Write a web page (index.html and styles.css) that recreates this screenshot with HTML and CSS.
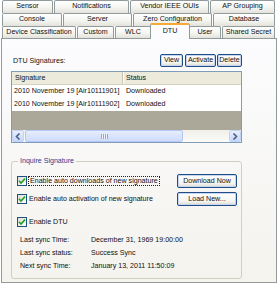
FILE: index.html
```html
<!DOCTYPE html>
<html>
<head>
<meta charset="utf-8">
<link rel="stylesheet" href="styles.css">
</head>
<body>
<div class="dialog">
  <div class="tabrow r1">
    <div class="tab">Sensor</div>
    <div class="tab">Notifications</div>
    <div class="tab">Vendor IEEE OUIs</div>
    <div class="tab">AP Grouping</div>
  </div>
  <div class="tabrow r2">
    <div class="tab">Console</div>
    <div class="tab">Server</div>
    <div class="tab">Zero Configuration</div>
    <div class="tab">Database</div>
  </div>
  <div class="tabrow r3">
    <div class="tab">Device Classification</div>
    <div class="tab">Custom</div>
    <div class="tab">WLC</div>
    <div class="tab selected">DTU</div>
    <div class="tab">User</div>
    <div class="tab">Shared Secret</div>
  </div>
  <div class="panel">
    <div class="sig-head">
      <span class="sig-label">DTU Signatures:</span>
      <div class="btns">
        <button class="btn b-view">View</button>
        <button class="btn b-activate">Activate</button>
        <button class="btn b-delete">Delete</button>
      </div>
    </div>
    <div class="list">
      <div class="lhead">
        <div class="c1">Signature</div>
        <div class="c2">Status</div>
      </div>
      <div class="lrow"><div class="c1">2010 November 19 [Air10111901]</div><div class="c2">Downloaded</div></div>
      <div class="lrow"><div class="c1">2010 November 19 [Air10111902]</div><div class="c2">Downloaded</div></div>
      <div class="lempty"></div>
      <div class="hscroll">
        <div class="sbtn"><svg width="6" height="7" viewBox="0 0 6 7"><path d="M4.5 0.5 L1.5 3.5 L4.5 6.5" fill="none" stroke="#4d6185" stroke-width="1.6"/></svg></div>
        <div class="track">
          <div class="thumb"><span class="grip"></span></div>
        </div>
        <div class="sbtn"><svg width="6" height="7" viewBox="0 0 6 7"><path d="M1.5 0.5 L4.5 3.5 L1.5 6.5" fill="none" stroke="#4d6185" stroke-width="1.6"/></svg></div>
      </div>
    </div>
    <fieldset class="group">
      <legend>Inquire Signature</legend>
      <div class="opt-row">
        <label class="chk"><span class="box"><svg width="8" height="8" viewBox="0 0 8 8"><path d="M1 3.8 L3 6 L7 1.6" fill="none" stroke="#21a121" stroke-width="1.6"/></svg></span><span class="focus">Enable auto downloads of new signature</span></label>
        <button class="btn wide">Download Now</button>
      </div>
      <div class="opt-row r-two">
        <label class="chk"><span class="box"><svg width="8" height="8" viewBox="0 0 8 8"><path d="M1 3.8 L3 6 L7 1.6" fill="none" stroke="#21a121" stroke-width="1.6"/></svg></span><span>Enable auto activation of new signature</span></label>
        <button class="btn wide">Load New...</button>
      </div>
      <div class="opt-row r-three">
        <label class="chk"><span class="box"><svg width="8" height="8" viewBox="0 0 8 8"><path d="M1 3.8 L3 6 L7 1.6" fill="none" stroke="#21a121" stroke-width="1.6"/></svg></span><span>Enable DTU</span></label>
      </div>
      <div class="sync">
        <div class="srow"><span class="sl">Last sync Time:</span><span>December 31, 1969 19:00:00</span></div>
        <div class="srow"><span class="sl">Last sync status:</span><span>Success Sync</span></div>
        <div class="srow"><span class="sl">Next sync Time:</span><span>January 13, 2011 11:50:09</span></div>
      </div>
    </fieldset>
  </div>
</div>
</body>
</html>
```
FILE: styles.css
```css
* { box-sizing: border-box; }
html, body { margin: 0; padding: 0; }
body {
  background: #ffffff;
  font-family: "Liberation Sans", Arial, sans-serif;
  font-size: 7.1px;
  color: #111;
  width: 280px;
  height: 284px;
  overflow: hidden;
}
.dialog {
  width: 277px;
  padding-left: 1px;
}
.tabrow {
  display: grid;
  column-gap: 1px;
  height: 13px;
  margin: 0 2px 0 1px;
}
.r1 { grid-template-columns: 51px 75px 79px 1fr; }
.r2 { grid-template-columns: 60px 69px 79px 1fr; }
.r3 { grid-template-columns: 74px 37px 36px 36px 32px 1fr; height: 12px; }
.tab {
  border: 1px solid #919b9c;
  border-bottom: none;
  border-radius: 2px 2px 0 0;
  background: linear-gradient(#ffffff, #f3f3ef 60%, #e3e2da);
  text-align: center;
  line-height: 11px;
  white-space: nowrap;
  overflow: hidden;
  height: 13px;
}
.r3 .tab { height: 12px; }
.tab.selected {
  margin: -3px -2px 0 -2px;
  height: 16px;
  background: #fcfcfe;
  border-top: 2px solid #f5a937;
  position: relative;
  z-index: 2;
  line-height: 12px;
}
.panel {
  border: 1px solid #919b9c;
  background: linear-gradient(#fcfcfe, #f4f3ee);
  height: 245px;
  padding: 15px 0 0 9px;
  position: relative;
  z-index: 1;
}
.sig-head {
  width: 231px;
  height: 13px;
  display: flex;
  align-items: center;
  justify-content: space-between;
}
.sig-label { padding-left: 2px; }
.btns { display: flex; gap: 1px; }
.btn {
  font-family: "Liberation Sans", Arial, sans-serif;
  font-size: 7.1px;
  color: #111;
  border: 1px solid #1f4d86;
  border-radius: 2px;
  background: linear-gradient(#ffffff, #f4f4f0 70%, #dcd9cc);
  padding: 0;
  height: 13px;
  line-height: 11px;
  box-shadow: inset 0 0 0 1px #c6d6f0;
}
.b-view { width: 23px; margin-right: 1px; }
.b-activate { width: 31px; }
.b-delete { width: 25px; }
.list {
  width: 231px;
  margin-top: 4px;
  border: 1px solid #7f9db9;
  background: #ffffff;
}
.lhead {
  display: flex;
  height: 13px;
  background: #ebeadb;
  border-bottom: 1px solid #d6d2c2;
  line-height: 12px;
}
.lhead .c1 {
  border-right: 1px solid #c7c5b2;
  box-shadow: 1px 0 0 #ffffff;
}
.c1 { width: 111px; padding-left: 3px; white-space: nowrap; overflow: hidden; }
.lrow .c1 { padding-left: 2px; }
.c2 { padding-left: 3px; white-space: nowrap; }
.lrow {
  display: flex;
  height: 13px;
  line-height: 13px;
}
.lempty {
  height: 19px;
  background: #aca899;
}
.hscroll {
  display: flex;
  height: 12px;
  background: #f7f6f1;
}
.sbtn {
  width: 12px;
  height: 12px;
  border: 1px solid #c3d3f5;
  border-radius: 2px;
  background: linear-gradient(#e8effd, #c7d7fb);
  display: flex;
  align-items: center;
  justify-content: center;
}
.track {
  flex: 1;
  padding: 0 46px 0 1px;
  background: linear-gradient(#f0efe9, #fbfbf9);
}
.thumb {
  height: 12px;
  border: 1px solid #b4c8f6;
  border-radius: 2px;
  background: linear-gradient(#e6edfd, #cedcfb);
  display: flex;
  align-items: center;
  justify-content: center;
}
.grip {
  width: 7px;
  height: 5px;
  background: repeating-linear-gradient(90deg, #8ea7e2 0 1px, #eef3fe 1px 2px);
}
.group {
  width: 231px;
  margin: 13px 0 0 0;
  padding: 8px 4px 0 5px;
  border: 1px solid #d0d0bf;
  border-radius: 3px;
  height: 123px;
}
.group legend {
  color: #1d4293;
  padding: 0 2px;
  margin-left: 1px;
  line-height: 10px;
}
.opt-row {
  display: flex;
  justify-content: space-between;
  align-items: center;
  height: 14px;
}
.r-two { margin-top: 4px; }
.r-three { margin-top: 9px; height: 13px; }
.chk {
  display: flex;
  align-items: center;
  white-space: nowrap;
}
.box {
  width: 10px;
  height: 10px;
  border: 1px solid #1c5180;
  background: linear-gradient(135deg, #dcdcd7, #ffffff);
  margin-right: 2px;
  display: flex;
  align-items: center;
  justify-content: center;
}
.focus {
  outline: 1px dotted #222;
  outline-offset: 0;
  padding: 0 1px;
}
.btn.wide {
  width: 60px;
  height: 14px;
}
.sync {
  margin-top: 6px;
  padding-left: 3px;
}
.srow {
  display: flex;
  line-height: 13px;
  height: 13px;
}
.sl { width: 71px; }
```
